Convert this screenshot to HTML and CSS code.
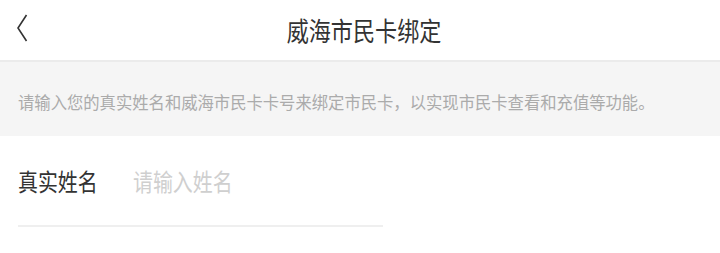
FILE: index.html
```html
<!DOCTYPE html>
<html lang="zh-CN">
<head>
    <meta charset="UTF-8">
    <meta name="viewport" content="width=device-width, initial-scale=1.0">
    <title>威海市民卡绑定</title>
    <link rel="stylesheet" href="styles.css">
</head>
<body>
    <div class="nav-bar">
        <a class="nav-back" href="#">
            <svg width="14" height="30" viewBox="0 0 14 30">
                <path d="M11.5 2 L3 15 L11.5 28" fill="none" stroke="#333" stroke-width="1.6"/>
            </svg>
        </a>
        <h1 class="nav-title"><span>威海市民卡绑定</span></h1>
    </div>

    <div class="tip-bar">
        <p class="tip-text">请输入您的真实姓名和威海市民卡卡号来绑定市民卡，以实现市民卡查看和充值等功能。</p>
    </div>

    <div class="form">
        <div class="form-row">
            <label class="form-label" for="name"><span>真实姓名</span></label>
            <input class="form-input" id="name" type="text" placeholder="请输入姓名">
        </div>
    </div>
</body>
</html>
```

FILE: styles.css
```css
body {
    margin: 0;
    font-family: "Noto Sans CJK SC", "Noto Sans", sans-serif;
    background: #fff;
    color: #333;
}

.nav-bar {
    height: 60px;
    display: flex;
    align-items: center;
    justify-content: center;
    position: relative;
    border-bottom: 2px solid #ebebeb;
}

.nav-back {
    position: absolute;
    left: 15px;
    top: 13px;
    display: block;
}

.nav-title {
    margin: 0;
    padding-left: 8px;
    font-size: 26px;
    font-weight: 400;
    color: #333;
    line-height: 1;
}

.nav-title span {
    display: inline-block;
    transform: scaleX(0.85);
}

.tip-bar {
    background: #f5f5f5;
    height: 74px;
    display: flex;
    align-items: center;
    padding: 0 18px;
}

.tip-text {
    margin: 4px 0 0;
    font-size: 17px;
    color: #ababab;
    white-space: nowrap;
    transform: scaleX(0.96);
    transform-origin: left center;
}

.form {
    padding: 0 18px;
}

.form-row {
    width: 365px;
    height: 91px;
    display: flex;
    align-items: center;
    border-bottom: 2px solid #efefef;
    box-sizing: border-box;
}

.form-label {
    width: 115px;
    flex-shrink: 0;
    font-size: 24px;
    color: #333;
}

.form-label span {
    display: inline-block;
    transform: scaleX(0.83);
    transform-origin: left center;
}

.form-input {
    border: none;
    outline: none;
    padding: 0;
    font-family: inherit;
    font-size: 24px;
    width: 240px;
    background: transparent;
    transform: scaleX(0.83);
    transform-origin: left center;
}

.form-input::placeholder {
    color: #cfcfcf;
}
```
